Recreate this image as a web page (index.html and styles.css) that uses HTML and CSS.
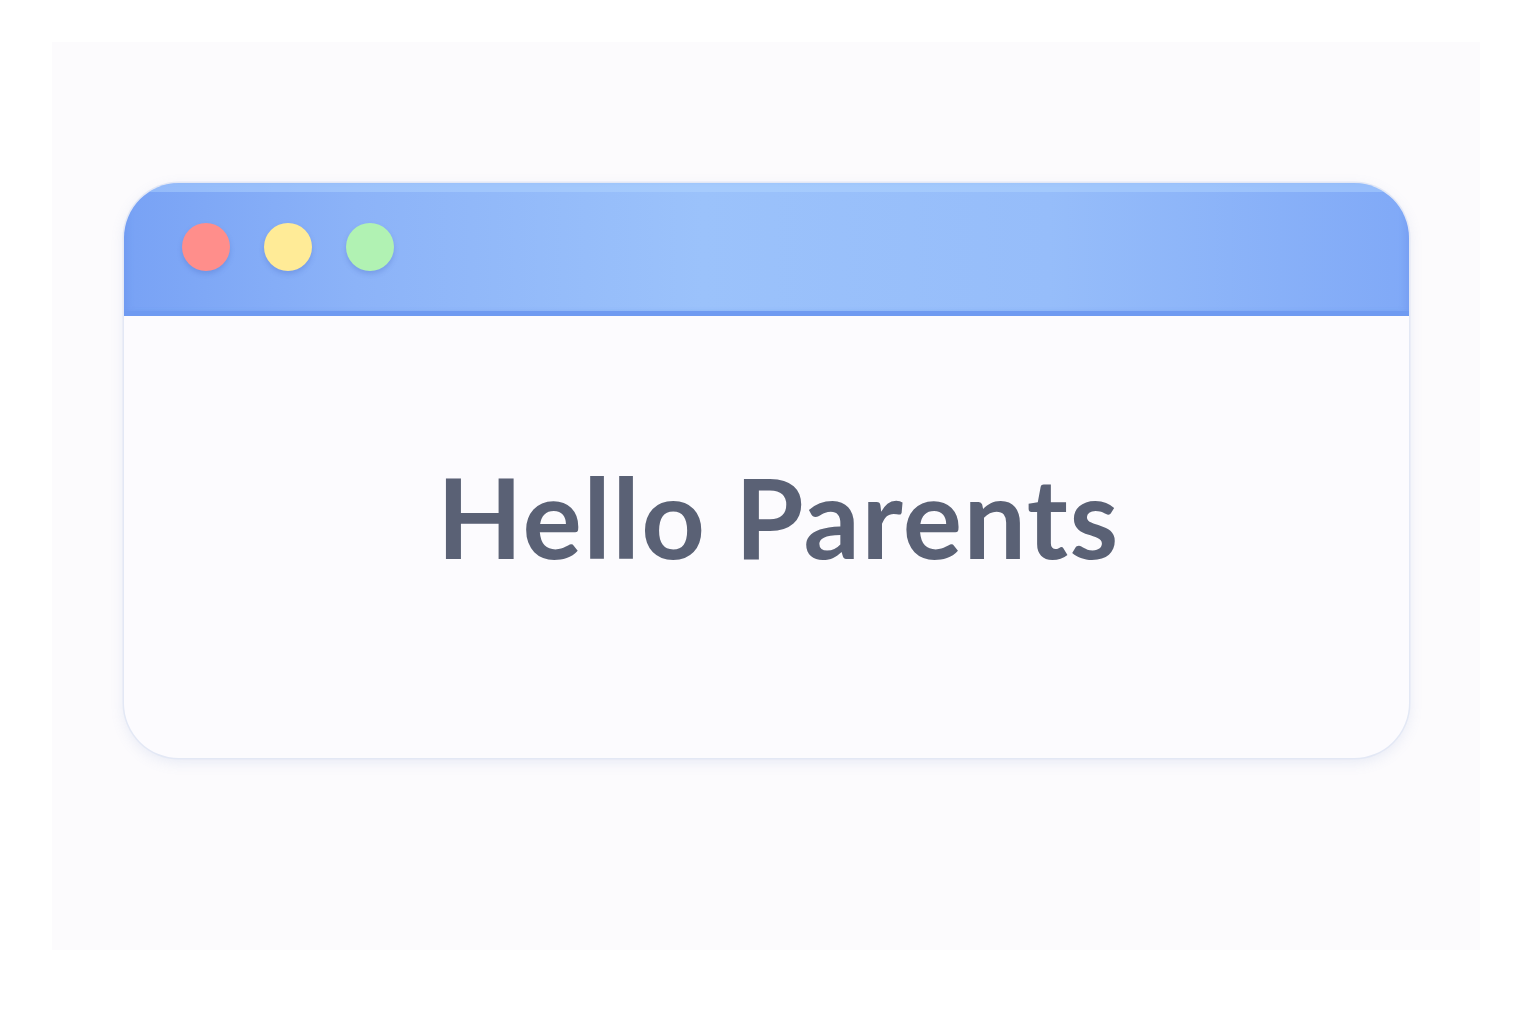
FILE: index.html
```html
<!DOCTYPE html>
<html lang="en">
<head>
    <meta charset="UTF-8">
    <meta name="viewport" content="width=device-width, initial-scale=1.0">
    <title>Hello Parents</title>
    <link rel="stylesheet" href="styles.css">
</head>
<body>

    <div class="panel">
        <div class="window">
            <div class="title-bar">
                <span class="dot red"></span>
                <span class="dot yellow"></span>
                <span class="dot green"></span>
            </div>
            <div class="window-body">
                <h1>Hello Parents</h1>
            </div>
        </div>
    </div>

</body>
</html>
```

FILE: styles.css
```css
body {
    font-family: 'Lato', 'Open Sans', sans-serif;
    background: #ffffff;
    margin: 0;
    padding: 0;
    height: 100vh;
    overflow: hidden;
}

.panel {
    margin: 42px 0 0 52px;
    width: 1428px;
    height: 908px;
    box-sizing: border-box;
    padding: 141px 71px 0 72px;
    background: #fcfbfd;
}

.window {
    height: 575px;
    border-radius: 55px;
    overflow: hidden;
    background: #fcfbfe;
    box-shadow: 0 0 0 1.5px #e3e8f5, 0 4px 14px rgba(120, 140, 200, 0.16);
    display: flex;
    flex-direction: column;
}

.title-bar {
    height: 128px;
    flex-shrink: 0;
    display: flex;
    align-items: center;
    gap: 34px;
    padding: 0 0 0 58px;
    background: linear-gradient(90deg, #78a2f5 0%, #8cb3f8 18%, #9bc2fb 45%, #96bdfa 72%, #80a9f7 100%);
    border-bottom: 5px solid #6f9af1;
    box-shadow: inset 0 9px 0 rgba(180, 215, 255, 0.45), inset 6px 0 6px -3px rgba(100, 140, 235, 0.35), inset -6px 0 6px -3px rgba(100, 140, 235, 0.35);
}

.dot {
    width: 48px;
    height: 48px;
    border-radius: 50%;
    box-shadow: 0 3px 5px rgba(70, 100, 190, 0.28);
}

.red {
    background: #ff8e8b;
}

.yellow {
    background: #ffeb97;
}

.green {
    background: #b1f2b3;
}

.window-body {
    flex: 1;
    display: flex;
    justify-content: center;
    align-items: center;
    padding: 0 0 42px 24px;
}

.window-body h1 {
    margin: 0;
    font-size: 111px;
    font-weight: 700;
    color: #5a6175;
    letter-spacing: 1.5px;
}
```
